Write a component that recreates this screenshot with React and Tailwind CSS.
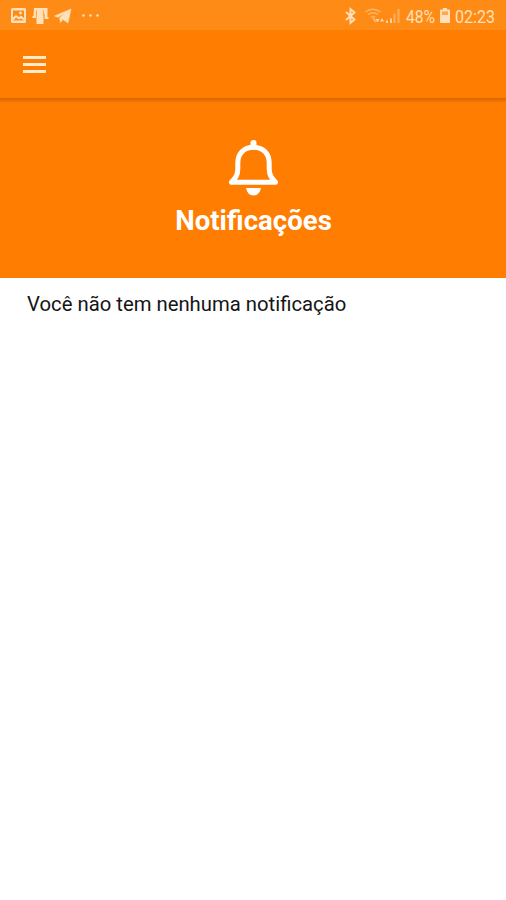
function StatusBar() {
  return (
    <div className="flex h-[30px] items-start justify-between bg-[#ff8b17] text-[#ffe0b8]">
      <svg width="120" height="30" viewBox="0 0 120 30" fill="currentColor" aria-hidden="true">
        <path fillRule="evenodd" d="M12.500 8h12a1.500 1.500 0 0 1 1.500 1.500v12a1.500 1.500 0 0 1-1.500 1.500h-12a1.500 1.500 0 0 1-1.500-1.500v-12A1.500 1.500 0 0 1 12.500 8ZM13 10.500v7l3-2.500 3 2 2-1.500 3 2.500v-7.500ZM13.500 20.500h10.500l-3-2-2 1-3-2Z" />
        <circle cx="20.500" cy="13" r="1.400" />
        <path d="M34 8h13.500v9h1v2h-4v-5h-1v10h-7v-6h-4v-2h1Z" />
        <path d="M36.500 10.500v7M43.600 10.500v6" fill="none" stroke="#ffa544" strokeWidth="1" />
        <path d="m54.500 16 16.500-7-3 14-5-3.500-2.500 3-1-4.500 5-4.500-6.500 3.800Z" stroke="currentColor" strokeWidth=".5" strokeLinejoin="round" />
        <circle cx="83.500" cy="15.500" r="1.300" />
        <circle cx="90.500" cy="15.500" r="1.300" />
        <circle cx="97.500" cy="15.500" r="1.300" />
      </svg>
      <div className="flex font-[Roboto,sans-serif] text-[18px] leading-[33px]">
        <svg width="66" height="30" viewBox="340 0 66 30" fill="none" stroke="currentColor" aria-hidden="true">
          <path d="m346 12 8.500 7.500-4 3.500V9l4 3.500-8.500 7.500" strokeWidth="1.900" />
          <g opacity=".5">
            <path d="M365.500 12q7-5.500 15 0M368 14.500q5-3.500 10 0M371 17.500q2.500-2 4 0" strokeWidth="1.500" />
            <path d="M373 18l3 4" strokeWidth="2" />
          </g>
          <path d="M375.500 19h4l-2 3.500ZM380 21.500h4l-2-3.500Z" fill="currentColor" stroke="none" opacity=".85" />
          <path d="M387 20.500v2.500M391 18.500v4.500" strokeWidth="2" opacity=".85" />
          <path d="M394.500 13.500V23M398.500 9v14" strokeWidth="2" opacity=".42" />
        </svg>
        <span className="w-[33px] origin-left scale-x-[0.87] whitespace-nowrap">48%</span>
        <svg width="16" height="30" viewBox="439 0 16 30" fill="currentColor" aria-hidden="true">
          <path fillRule="evenodd" d="M443 8h4v1.500h2q1 0 1 1V22q0 1-1 1h-8q-1 0-1-1V10.500q0-1 1-1h2ZM442 11.500V15h6v-3.500Z" />
          <path d="M442 11.500h6V15h-6Z" opacity=".35" />
        </svg>
        <span className="w-[51px] origin-left scale-x-[0.89] whitespace-nowrap">02:23</span>
      </div>
    </div>
  );
}

export default function App() {
  return (
    <div className="flex h-[900px] w-[506px] flex-col overflow-hidden bg-white font-[Roboto,sans-serif]">
      <StatusBar />
      <header className="flex h-[68px] shrink-0 items-start bg-[#ff7d00] pt-[26px] pl-[23px]">
        <button aria-label="Menu" className="flex w-[23px] flex-col gap-[4px]">
          <span className="h-[3px] bg-[#ffe9cf]" />
          <span className="h-[3px] bg-[#ffe9cf]" />
          <span className="h-[3px] bg-[#ffe9cf]" />
        </button>
      </header>
      <section className="flex h-[180px] shrink-0 flex-col items-center bg-[#ff7d00]">
        <div className="h-[5px] w-full bg-linear-to-b from-[#d66500] to-[#ff7d00]" />
        <svg className="mt-[36px]" width="50" height="58" viewBox="228 139 50 58" fill="none" stroke="white" aria-hidden="true">
          <path d="M253.500 143v4" strokeWidth="6" strokeLinecap="round" />
          <path d="M253.500 147.300C243.500 147.300 237.800 154 237.800 163v6C237.800 175 235.500 178 231.500 182.300H275.500C271.500 178 269.200 175 269.200 169v-6C269.200 154 263.500 147.300 253.500 147.300Z" strokeWidth="5" strokeLinejoin="round" />
          <path d="M246 188h15q-1.500 7.500-7.500 7.500t-7.500-7.500Z" fill="white" stroke="none" />
        </svg>
        <h1 className="mt-[8px] pl-px text-[27.600px] leading-[32px] font-bold text-white">Notificações</h1>
      </section>
      <main className="pt-[13px] pl-[27px]">
        <p className="text-[20.300px] leading-[26px] whitespace-nowrap text-[#151515]">Você não tem nenhuma notificação</p>
      </main>
    </div>
  );
}
